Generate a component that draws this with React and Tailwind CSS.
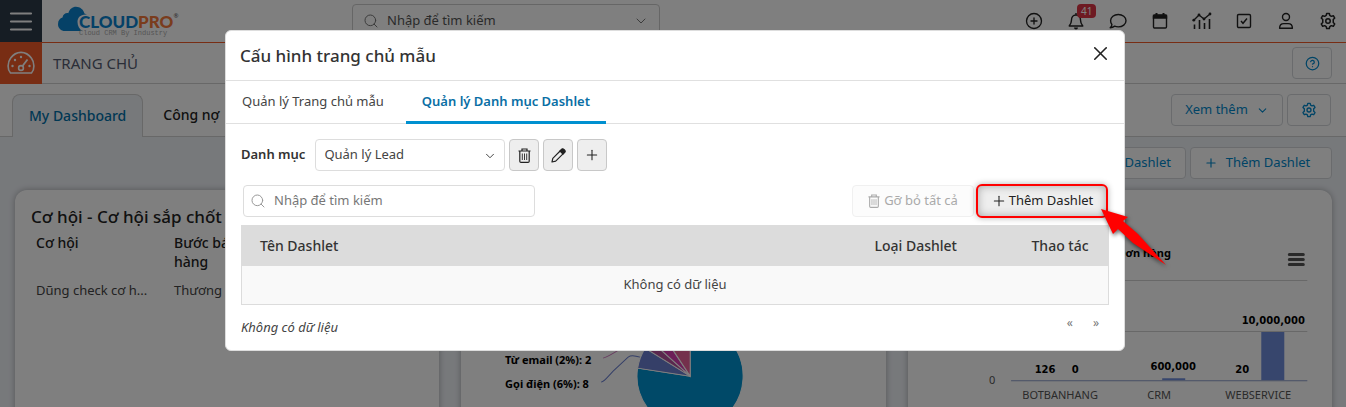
import React from 'react';
import { ChevronDown, CircleHelp, CirclePlus, Plus, Search, X } from 'lucide-react';

const cardClass = 'rounded-xl bg-white shadow-[0_0_6px_rgba(0,0,0,0.3)] overflow-hidden';
const outlineButton =
  'flex h-8 items-center justify-center rounded border border-[#d4d7db] bg-white text-[13px] text-[#0088cc]';
const squareButton =
  'flex h-8 w-[30px] items-center justify-center rounded border border-[#c8c8c8] bg-[#eeeeee] text-[#222222]';

const GearIcon = ({ className }) => (
  <svg viewBox="0 0 24 24" className={className} fill="none" stroke="currentColor" strokeWidth="2" strokeLinejoin="round">
    <path d="M9.6 4.6 10.2 2h3.6l.6 2.6 2 1.2 2.7-.9 1.9 3.2-2 1.9v4l2 1.9-1.9 3.2-2.7-.9-2 1.2-.6 2.6h-3.6l-.6-2.6-2-1.2-2.7.9L3 15.9 5 14v-4L3 8.1l1.9-3.2 2.7.9z" />
    <circle cx="12" cy="12" r="3" />
  </svg>
);

const BellIcon = () => (
  <svg viewBox="0 0 16 18" className="h-[18px] w-4" fill="none" stroke="currentColor" strokeWidth="1.4" strokeLinejoin="round">
    <path d="M8 1v2M8 3C5 3 3.5 5.2 3.5 8c0 3-1 4.2-2.3 6h13.6c-1.3-1.8-2.3-3-2.3-6C12.5 5.2 11 3 8 3z" />
    <path d="M6 15.5a2 2 0 0 0 4 0z" fill="currentColor" stroke="none" />
  </svg>
);

const CommentIcon = () => (
  <svg viewBox="0 0 18 18" className="h-[18px] w-[18px]" fill="none" stroke="currentColor" strokeWidth="1.4" strokeLinejoin="round">
    <path d="M9.3 2.5c4.3 0 7.7 2.7 7.7 6.2s-3.4 6.2-7.7 6.2c-1.3 0-2.5-.2-3.6-.7-1.3.9-2.7 1.5-4.5 1.6 1-1 1.6-2 1.7-3.3C2.1 11.5 1.6 10.2 1.6 8.7c0-3.5 3.4-6.2 7.7-6.2z" />
  </svg>
);

const CalendarIcon = () => (
  <svg viewBox="0 0 16 18" className="h-[18px] w-4" fill="none" stroke="currentColor" strokeWidth="1.4">
    <rect x="1.5" y="3" width="13" height="13" rx="1.2" />
    <path d="M1.5 3.5h13V6h-13z" fill="currentColor" />
    <path d="M4.5 1v3M11.5 1v3" strokeWidth="2" />
  </svg>
);

const ChartIcon = () => (
  <svg viewBox="0 0 20 18" className="h-[18px] w-5" fill="none" stroke="currentColor" strokeWidth="1.4">
    <path d="M1.5 8.5L7 3l5 4 6-5" strokeLinejoin="round" />
    <g fill="currentColor" stroke="none">
      <circle cx="1.8" cy="8.2" r="1.4" />
      <circle cx="7" cy="3" r="1.4" />
      <circle cx="12" cy="7" r="1.4" />
      <circle cx="18" cy="2" r="1.4" />
    </g>
    <path d="M2.5 12.5V17M7.5 8v9M12.5 11v6M17.5 7v10" strokeWidth="1.6" />
  </svg>
);

const CheckIcon = () => (
  <svg viewBox="0 0 16 16" className="h-4 w-4" fill="none" stroke="currentColor" strokeWidth="1.4">
    <rect x="1.5" y="1.5" width="13" height="13" rx="1.2" />
    <path d="M5 8l2 2.3 4-4.8" />
  </svg>
);

const UserIcon = () => (
  <svg viewBox="0 0 16 18" className="h-[18px] w-4" fill="none" stroke="currentColor" strokeWidth="1.4">
    <circle cx="8" cy="5" r="3.5" />
    <path d="M1.6 16.3c0-2.9 1.8-4.7 4.2-4.7h4.4c2.4 0 4.2 1.8 4.2 4.7z" strokeLinejoin="round" />
  </svg>
);

const TrashIcon = ({ className }) => (
  <svg viewBox="0 0 13 15" className={className} fill="none" stroke="currentColor">
    <path d="M.5 3h12M4 3V1h5v2M1.8 3v10.2c0 .7.5 1.2 1.2 1.2h7c.7 0 1.2-.5 1.2-1.2V3" strokeWidth="1.2" />
    <path d="M4.3 5.5v6.5M6.5 5.5v6.5M8.7 5.5v6.5" strokeWidth="0.9" />
  </svg>
);

const PencilIcon = () => (
  <svg viewBox="0 0 15 15" className="h-[15px] w-[15px]" fill="none" stroke="currentColor" strokeWidth="1.2" strokeLinejoin="round">
    <path d="M1 14l.8-3.7L9.6 2.5l2.9 2.9-7.8 7.8z" />
    <path d="M9 3l2-2c1-.8 3.9 1.8 3 3l-2 2z" fill="currentColor" />
  </svg>
);

const DashboardIcon = () => (
  <svg viewBox="0 0 28 24" className="h-6 w-7" fill="none" stroke="currentColor" strokeWidth="1.6">
    <path d="M3.5 22C.2 18.5.4 11.5 3.5 7.3 9-.6 19-.6 24.5 7.3c3.1 4.2 3.3 11.2 0 14.7z" strokeLinejoin="round" />
    <circle cx="14" cy="17" r="2.4" />
    <path d="M15.5 15L20.5 8.5" strokeWidth="1.8" />
    <g fill="currentColor" stroke="none">
      <circle cx="5.5" cy="15" r="1.2" />
      <circle cx="8" cy="9" r="1.2" />
      <circle cx="14" cy="6" r="1.2" />
      <circle cx="22.5" cy="15" r="1.2" />
    </g>
  </svg>
);

const Logo = () => (
  <div className="flex items-start">
    <svg viewBox="0 0 29 26" className="h-[26px] w-[29px]">
      <path
        d="M7 25C3 25 0 22 0 18.2c0-3.7 2-6 4.5-6.6C5 8.5 7.5 6.7 10.3 7.2 11.5 3 14.5.8 18 .8c4 0 7.5 2.8 8.4 6.7l2.6 1C22 8 19.5 12 19.5 16c0 4 2 7 4.5 9z"
        fill="#0a83cf"
      />
    </svg>
    <div className="-ml-2 pt-2">
      <div className="font-['Lato'] text-[17px] leading-4 font-black text-[#0a83cf]">
        CLOUD<span className="text-[#f4793b]">PRO</span>
      </div>
      <div className="font-['Liberation_Mono'] text-[7px] leading-[6px] text-[#aaaaaa]">Cloud CRM By Industry</div>
    </div>
    <span className="pt-1 text-[6px] leading-3 text-[#555555]">®</span>
  </div>
);

const Topbar = () => (
  <header className="flex h-[43px] items-center border-b border-[#f15a29] bg-white">
    <button aria-label="Menu" className="flex h-[42px] w-[42px] items-center justify-center bg-[#2c3b49] text-white">
      <svg viewBox="0 0 24 20" className="h-5 w-6" stroke="currentColor" strokeWidth="2.2" strokeLinecap="round">
        <path d="M2 2.5h20M2 10.5h20M2 18.5h20" />
      </svg>
    </button>
    <div className="ml-4 w-[294px]">
      <Logo />
    </div>
    <div className="flex h-[34px] w-[308px] items-center rounded border border-[#cccccc] px-2.5 text-[#777777]">
      <Search size={16} strokeWidth={1.5} />
      <input aria-label="Tìm kiếm" placeholder="Nhập để tìm kiếm" className="ml-2 min-w-0 flex-1 text-[13px] placeholder:text-[#555555]" />
      <ChevronDown size={16} strokeWidth={1.5} />
    </div>
    <nav className="ml-auto flex items-center gap-[22px] pr-2 text-[#222222]">
      <button aria-label="Thêm nhanh" className="flex w-5 justify-center"><CirclePlus size={18} strokeWidth={1.8} /></button>
      <button aria-label="Thông báo" className="relative flex w-5 justify-center">
        <BellIcon />
        <span className="absolute -top-2 left-[11px] rounded bg-[#dc3545] px-1 text-[10px] leading-[14px] text-white">41</span>
      </button>
      <button aria-label="Tin nhắn" className="flex w-5 justify-center"><CommentIcon /></button>
      <button aria-label="Lịch" className="flex w-5 justify-center"><CalendarIcon /></button>
      <button aria-label="Báo cáo" className="flex w-5 justify-center"><ChartIcon /></button>
      <button aria-label="Công việc" className="flex w-5 justify-center"><CheckIcon /></button>
      <button aria-label="Tài khoản" className="flex w-5 justify-center"><UserIcon /></button>
      <button aria-label="Cài đặt" className="flex w-5 justify-center"><GearIcon className="h-[18px] w-[18px]" /></button>
    </nav>
  </header>
);

const ModuleBar = () => (
  <div className="flex h-[41px] items-center border-b border-[#d0d0d0] bg-white pr-3.5">
    <div className="flex h-[42px] w-[42px] items-center justify-center bg-[#f15a29] text-white">
      <DashboardIcon />
    </div>
    <h1 className="ml-[11px] text-[15px] text-[#555b70]">TRANG CHỦ</h1>
    <button aria-label="Trợ giúp" className={`${outlineButton} ml-auto w-10`}>
      <CircleHelp size={15} />
    </button>
  </div>
);

const TabsBar = () => (
  <div className="flex h-[53px] items-end border-b border-[#d0d0d0] bg-white pr-[15px] pl-3">
    <a href="#my-dashboard" className="-mb-px flex h-[43px] items-center rounded-t-lg border border-b-0 border-[#d0d0d0] bg-[#eff2f7] px-4 text-sm font-medium text-[#0071a8]">
      My Dashboard
    </a>
    <a href="#cong-no" className="flex h-[43px] items-center px-5 text-sm font-medium text-[#222222]">Công nợ</a>
    <div className="mb-2.5 ml-auto flex gap-1">
      <button className={`${outlineButton} w-28 gap-2`}>
        Xem thêm <ChevronDown size={13} />
      </button>
      <button aria-label="Cài đặt dashboard" className={`${outlineButton} w-11`}>
        <GearIcon className="h-4 w-4" />
      </button>
    </div>
  </div>
);

const OpportunityCard = () => (
  <section className={cardClass}>
    <h2 className="px-4 pt-[15px] text-[17px] leading-6 font-medium text-[#222222]">Cơ hội - Cơ hội sắp chốt</h2>
    <table className="w-full table-fixed text-left text-sm text-[#222222]">
      <thead>
        <tr className="align-top leading-[19px]">
          <th className="w-[159px] pt-1 pb-2.5 pl-[21px] font-medium">Cơ hội</th>
          <th className="w-[90px] pt-1 pb-2.5 font-medium">Bước bán hàng</th>
          <th />
        </tr>
      </thead>
      <tbody>
        <tr className="text-[13px] text-[#444444]">
          <td className="pl-[21px]">Dũng check cơ h...</td>
          <td className="whitespace-nowrap">Thương lượng</td>
          <td />
        </tr>
      </tbody>
    </table>
  </section>
);

const SourceCard = () => (
  <section className={cardClass}>
    <svg viewBox="0 0 424 240" className="w-full" fontSize="11" fontWeight="bold" fontFamily="Noto Sans, sans-serif">
      <g stroke="#ffffff" strokeWidth="1">
        <path d="M229 186V133A53 53 0 1 1 176.500 178z" fill="#0093d0" />
        <path d="M229 186L176.500 178A53 53 0 0 1 184 158z" fill="#6a7fd0" />
        <path d="M229 186L184 158A53 53 0 0 1 190 151z" fill="#b4509c" />
        <path d="M229 186L190 151A53 53 0 0 1 200 142z" fill="#d83cb0" />
        <path d="M229 186L200 142A53 53 0 0 1 229 133z" fill="#e86098" />
      </g>
      <path d="M142 168c4-1 9-4 17-9" fill="none" stroke="#cf7ac0" />
      <path d="M140 192c4-1 7-6 12-11l15-14c4-3 6-1 12 0" fill="none" stroke="#6a7fd0" />
      <text x="44" y="174">Từ email (2%): 2</text>
      <text x="44" y="198">Gọi điện (6%): 8</text>
    </svg>
  </section>
);

const OrdersCard = () => (
  <section className={cardClass}>
    <svg viewBox="0 0 424 240" className="w-full" fontFamily="Noto Sans, sans-serif">
      <path d="M102 90.500h297M102 141.500h297" stroke="#d0d0d0" />
      <path d="M381 64.500h14M381 69.500h14M381 74.500h14" stroke="#555555" strokeWidth="3" strokeLinecap="round" />
      <path d="M254 188h23v2h-23zM353 142h23v48h-23z" fill="#6f8cda" />
      <path d="M103 190.500h296" stroke="#8c9cc8" />
      <g fontSize="10" fontWeight="bold" textAnchor="middle" fontFamily="DejaVu Sans, sans-serif">
        <text x="137" y="183">126</text>
        <text x="167" y="183">0</text>
        <text x="265" y="180">600,000</text>
        <text x="334" y="183">20</text>
        <text x="365" y="134">10,000,000</text>
      </g>
      <text x="236" y="67" fontSize="11" fontWeight="bold" textAnchor="middle">Đơn hàng</text>
      <g fontSize="11" fill="#555555" textAnchor="middle">
        <text x="84" y="194">0</text>
        <text x="152" y="209">BOTBANHANG</text>
        <text x="251" y="209">CRM</text>
        <text x="350" y="209">WEBSERVICE</text>
      </g>
    </svg>
  </section>
);

const Dashboard = () => (
  <main className="bg-[#eff2f7] pt-2.5 pr-3.5 pb-4 pl-[15px]">
    <div className="flex justify-end gap-1">
      <button className={`${outlineButton} w-[150px] justify-end pr-3.5`}>Dashlet</button>
      <button className={`${outlineButton} w-[142px] gap-2 pr-2`}>
        <Plus size={14} /> Thêm Dashlet
      </button>
    </div>
    <div className="mt-[11px] grid grid-cols-3 gap-[22px]">
      <OpportunityCard />
      <SourceCard />
      <OrdersCard />
    </div>
  </main>
);

const DashletModal = () => (
  <div role="dialog" aria-labelledby="modal-title" className="h-fit w-[900px] rounded-md border border-[#dddddd] bg-white text-[13px] text-[#444444]">
    <div className="flex h-[50px] items-center justify-between border-b border-[#e0e0e0] pr-3 pl-3.5">
      <h2 id="modal-title" className="text-[17px] font-medium text-[#333333]">Cấu hình trang chủ mẫu</h2>
      <button aria-label="Đóng" className="-mt-1 text-[#222222]"><X size={23} strokeWidth={1.6} /></button>
    </div>
    <div className="flex h-[43px] border-b border-[#e0e0e0] leading-5">
      <a href="#trang-chu-mau" className="px-4 py-2.5">Quản lý Trang chủ mẫu</a>
      <a href="#danh-muc" className="-mb-px ml-1.5 border-b-3 border-[#0090d0] px-4 py-2.5 font-semibold text-[#0a6fa5]">
        Quản lý Danh mục Dashlet
      </a>
    </div>
    <div className="px-[15px] pt-[15px] pb-3">
      <div className="flex items-center gap-1">
        <label htmlFor="category" className="mr-1.5 font-semibold text-[#333333]">Danh mục</label>
        <div className="relative w-[190px]">
          <select id="category" className="h-8 w-full appearance-none rounded border border-[#dddddd] bg-white pl-2">
            <option>Quản lý Lead</option>
          </select>
          <ChevronDown size={14} strokeWidth={1.7} className="pointer-events-none absolute top-2.5 right-2" />
        </div>
        <button aria-label="Xóa danh mục" className={squareButton}><TrashIcon className="h-[15px] w-[13px]" /></button>
        <button aria-label="Sửa danh mục" className={squareButton}><PencilIcon /></button>
        <button aria-label="Thêm danh mục" className={squareButton}><Plus size={16} strokeWidth={1.6} /></button>
      </div>
      <div className="mt-[13px] flex items-center pr-px pl-0.5">
        <div className="flex h-8 w-[292px] items-center rounded border border-[#dddddd] px-1.5 text-[#999999]">
          <Search size={16} strokeWidth={1.5} />
          <input aria-label="Tìm dashlet" placeholder="Nhập để tìm kiếm" className="ml-2 min-w-0 flex-1 placeholder:text-[#777777]" />
        </div>
        <button disabled className="ml-auto flex h-8 w-[122px] items-center justify-center gap-1 rounded border border-[#f0f0f0] bg-[#fcfcfc] text-[#aaaaaa]">
          <TrashIcon className="h-3.5 w-3" /> Gỡ bỏ tất cả
        </button>
        <div className="relative ml-0.5">
          <button className="flex h-[34px] w-[132px] items-center justify-center gap-0.5 rounded-md border-2 border-[#ff0000] bg-[#eeeeee] text-[#222222] shadow-[0_0_6px_rgba(0,0,0,0.3),inset_0_0_8px_rgba(0,0,0,0.3)]">
            <Plus size={16} strokeWidth={1.6} /> Thêm Dashlet
          </button>
          <svg viewBox="0 0 66 58" className="absolute top-[25px] left-[125px] h-[58px] w-[66px] drop-shadow-[1px_2px_2px_rgba(0,0,0,0.6)]" fill="#ff0000">
            <path d="M0 0L27 8 22 12 37 25 65 56 32 34 17 20 12 25z" />
          </svg>
        </div>
      </div>
      <table className="mt-[7px] w-full border border-[#dcdcdc] text-left">
        <thead>
          <tr className="h-10 bg-[#dcdcdc] text-sm text-[#333333]">
            <th className="pl-[18px] font-medium">Tên Dashlet</th>
            <th className="w-[157px] font-medium">Loại Dashlet</th>
            <th className="w-[77px] font-medium">Thao tác</th>
          </tr>
        </thead>
        <tbody>
          <tr className="h-[39px] bg-[#f9f9f9]">
            <td colSpan={3} className="text-center">Không có dữ liệu</td>
          </tr>
        </tbody>
      </table>
      <div className="mt-3 flex items-start justify-between pb-px leading-5">
        <span className="italic">Không có dữ liệu</span>
        <div className="flex gap-5 pr-2.5 text-xs leading-3 text-[#777777]">
          <button aria-label="Trang trước">«</button>
          <button aria-label="Trang sau">»</button>
        </div>
      </div>
    </div>
  </div>
);

const App = () => (
  <div className="relative h-screen overflow-hidden bg-[#eff2f7] font-['Noto_Sans',sans-serif]">
    <Topbar />
    <ModuleBar />
    <TabsBar />
    <Dashboard />
    <div className="absolute inset-0 flex justify-center bg-black/50 pt-[30px] pl-1">
      <DashletModal />
    </div>
  </div>
);

export default App;
